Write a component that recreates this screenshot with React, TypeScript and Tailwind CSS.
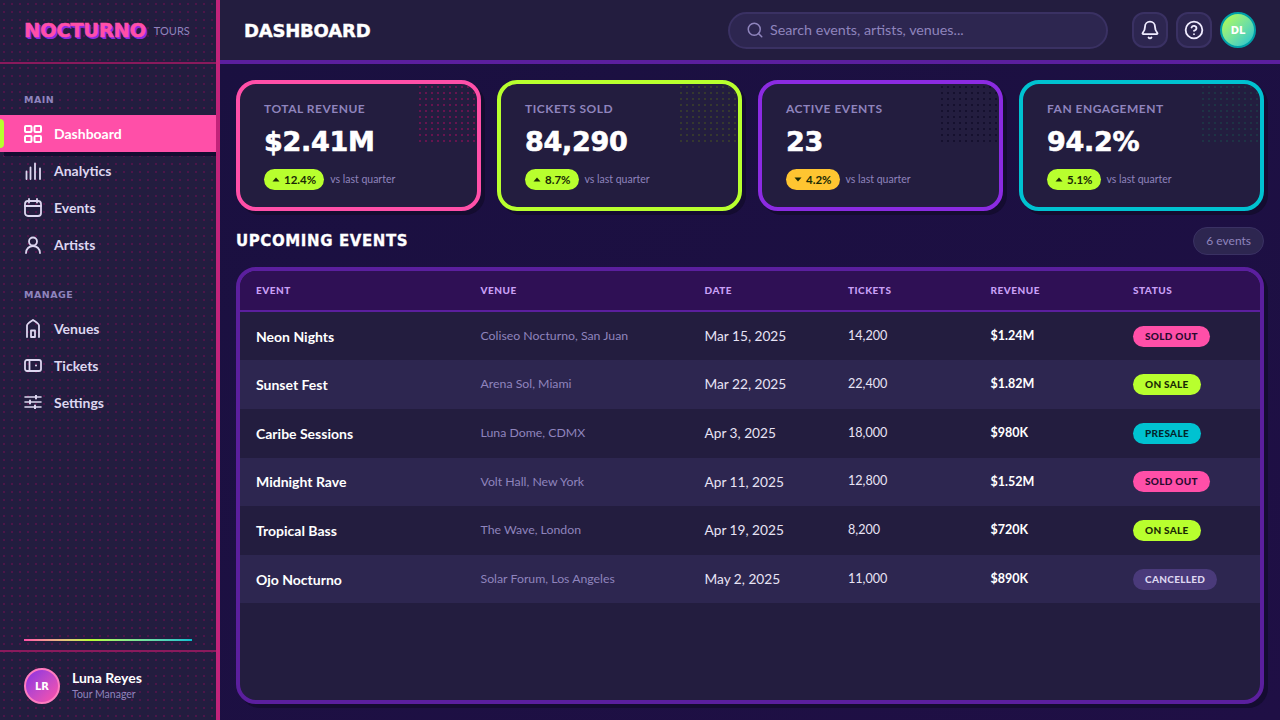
import { Search, Bell, CircleHelp } from "lucide-react";
import type { ReactNode } from "react";

const display = "font-['DejaVu_Sans'] font-black";

const DashIcon = () => (
  <svg width="18" height="18" viewBox="0 0 18 18" fill="none" stroke="currentColor" strokeWidth="2">
    <rect x="1" y="1" width="6.500" height="6" rx="1" />
    <rect x="10.500" y="1" width="6.500" height="6" rx="1" />
    <rect x="1" y="11" width="6.500" height="6" rx="1" />
    <rect x="10.500" y="11" width="6.500" height="6" rx="1" />
  </svg>
);

const BarsIcon = () => (
  <svg width="18" height="18" viewBox="0 0 18 18" fill="none" stroke="currentColor" strokeWidth="1.800" strokeLinecap="round">
    <path d="M2.500 17V9.500M6.500 17V5.500M11 17V1.500M16 17V6.500" />
  </svg>
);

const CalIcon = () => (
  <svg width="18" height="19" viewBox="0 0 18 19" fill="none" stroke="currentColor" strokeWidth="1.800" strokeLinecap="round">
    <rect x="1" y="3" width="16" height="15" rx="3" />
    <path d="M1 8h16M5 1v3.500M13 1v3.500" />
  </svg>
);

const UserIcon = () => (
  <svg width="18" height="18" viewBox="0 0 18 18" fill="none" stroke="currentColor" strokeWidth="1.800" strokeLinecap="round">
    <circle cx="9" cy="5.500" r="4" />
    <path d="M2 17c0-4 3-7 7-7s7 3 7 7" />
  </svg>
);

const VenueIcon = () => (
  <svg width="18" height="19" viewBox="0 0 18 19" fill="none" stroke="currentColor" strokeWidth="1.800" strokeLinejoin="round" strokeLinecap="round">
    <path d="M3 18V6.500C3 5 4 4.500 9 1c5 3.500 6 4 6 5.500V18" />
    <path d="M7 18v-6.500h4V18z" />
  </svg>
);

const TicketIcon = () => (
  <svg width="18" height="13" viewBox="0 0 18 13" fill="none" stroke="currentColor" strokeWidth="1.800">
    <rect x="1" y="1" width="16" height="11" rx="2" />
    <path d="M5.500 1v11" />
    <circle cx="12" cy="6.500" r="1" fill="currentColor" stroke="none" />
  </svg>
);

const SlidersIcon = () => (
  <svg width="18" height="14" viewBox="0 0 18 14" fill="none" stroke="currentColor" strokeWidth="1.600" strokeLinecap="round">
    <path d="M1 2h16M1 7h16M1 12h16" />
    <path d="M12 0.500v3M6 5.500v3M11 10.500v3" strokeWidth="2" />
  </svg>
);

const Arrow = ({ up }: { up: boolean }) => (
  <svg width="8" height="5" viewBox="0 0 8 5" fill="currentColor">
    <path d={up ? "M4 0.500L7.500 4.500H0.500z" : "M4 4.500L0.500 0.500H7.500z"} />
  </svg>
);

const Nav = ({ icon, label, active }: { icon: ReactNode; label: string; active?: boolean }) => (
  <div
    className={
      active
        ? "relative flex h-[37px] items-center gap-3 bg-[#ff4fa8] pl-6 text-[14px] font-bold text-white shadow-[4px_4px_0_#140c30]"
        : "flex h-[37px] items-center gap-3 pl-6 text-[14px] font-bold text-[#ddd6f0]"
    }
  >
    {active && <div className="absolute top-1 left-0 h-[29px] w-1 rounded-r bg-[#b8ff2e]" />}
    <span className="flex w-[18px] justify-center">{icon}</span>
    {label}
  </div>
);

const cards = [
  { title: "TOTAL REVENUE", value: "$2.41M", delta: "12.4%", up: true, border: "border-[#ff4fa8]", dots: "bg-[radial-gradient(circle,#66144f_1px,transparent_1.200px)]" },
  { title: "TICKETS SOLD", value: "84,290", delta: "8.7%", up: true, border: "border-[#b8ff2e]", dots: "bg-[radial-gradient(circle,#35382f_1px,transparent_1.200px)]" },
  { title: "ACTIVE EVENTS", value: "23", delta: "4.2%", up: false, border: "border-[#8b2be2]", dots: "bg-[radial-gradient(circle,#15102e_1px,transparent_1.200px)]" },
  { title: "FAN ENGAGEMENT", value: "94.2%", delta: "5.1%", up: true, border: "border-[#00c2d1]", dots: "bg-[radial-gradient(circle,#1e3345_1px,transparent_1.200px)]" },
];

const rows = [
  ["Neon Nights", "Coliseo Nocturno, San Juan", "Mar 15, 2025", "14,200", "$1.24M", "SOLD OUT"],
  ["Sunset Fest", "Arena Sol, Miami", "Mar 22, 2025", "22,400", "$1.82M", "ON SALE"],
  ["Caribe Sessions", "Luna Dome, CDMX", "Apr 3, 2025", "18,000", "$980K", "PRESALE"],
  ["Midnight Rave", "Volt Hall, New York", "Apr 11, 2025", "12,800", "$1.52M", "SOLD OUT"],
  ["Tropical Bass", "The Wave, London", "Apr 19, 2025", "8,200", "$720K", "ON SALE"],
  ["Ojo Nocturno", "Solar Forum, Los Angeles", "May 2, 2025", "11,000", "$890K", "CANCELLED"],
];

const statusClass: Record<string, string> = {
  "SOLD OUT": "bg-[#ff4fa8] text-[#2a0a30]",
  "ON SALE": "bg-[#b8ff2e] text-[#1a2a05]",
  PRESALE: "bg-[#00c2d1] text-[#04262c]",
  CANCELLED: "bg-[#4a3a7a] text-[#ddd6f0]",
};

const cols = "grid grid-cols-[224.500px_224px_143.500px_142.500px_142.500px_1fr] items-center pl-4";

export default function App() {
  return (
    <div className="flex h-screen w-full overflow-hidden bg-[#1a1040] font-['Lato','Liberation_Sans',sans-serif] text-white">
      <aside className="flex h-full w-[220px] shrink-0 flex-col overflow-hidden border-r-4 border-[#c2237a] bg-[#231d3f] bg-[radial-gradient(circle,#4d1549_1px,transparent_1.200px)] bg-[size:8px_8px]">
        <div className="flex h-[64px] shrink-0 items-center gap-2 border-b-2 border-[#8a1a5c] pl-6">
          <span className={`${display} text-[19.500px] tracking-[-0.300px] text-[#ff4fa8] [-webkit-text-stroke:0.4px_#ff4fa8] [text-shadow:1px_1px_0_#8b2be2,2px_2px_0_#8b2be2]`}>NOCTURNO</span>
          <span className="text-[11px] text-[#8f84bd]">TOURS</span>
        </div>
        <div className="pt-[29px]">
          <div className={`${display} mb-[8px] pl-6 text-[9.500px] tracking-wider text-[#8f84bd]`}>MAIN</div>
          <Nav active icon={<DashIcon />} label="Dashboard" />
          <Nav icon={<BarsIcon />} label="Analytics" />
          <Nav icon={<CalIcon />} label="Events" />
          <Nav icon={<UserIcon />} label="Artists" />
          <div className={`${display} mt-[25px] mb-[7px] pl-6 text-[9.500px] tracking-wider text-[#8f84bd]`}>MANAGE</div>
          <Nav icon={<VenueIcon />} label="Venues" />
          <Nav icon={<TicketIcon />} label="Tickets" />
          <Nav icon={<SlidersIcon />} label="Settings" />
        </div>
        <div className="mt-auto mr-6 mb-[9px] ml-6 h-[2px] shrink-0 bg-gradient-to-r from-[#ff4fa8] via-[#b8ff2e] via-40% to-[#00c2d1]" />
        <div className="flex h-[70px] shrink-0 items-center gap-3 border-t-2 border-[#8a1a5c] pl-6">
          <div className={`${display} flex h-9 w-9 items-center justify-center rounded-full border-2 border-[#ff7cc0] bg-gradient-to-br from-[#8b2be2] to-[#ff4fa8] text-[10px]`}>LR</div>
          <div>
            <div className="text-[14px] leading-[17px] font-bold">Luna Reyes</div>
            <div className="text-[10.500px] leading-[17px] text-[#8f84bd]">Tour Manager</div>
          </div>
        </div>
      </aside>

      <div className="flex min-w-0 flex-1 flex-col">
        <header className="flex h-[64px] shrink-0 items-center border-b-4 border-[#5b1f9e] bg-[#231d3f] pr-6 pl-6">
          <h1 className={`${display} text-[18px] tracking-[-0.200px] [-webkit-text-stroke:0.4px_white]`}>DASHBOARD</h1>
          <div className="ml-auto flex h-[37px] w-[380px] items-center gap-[6px] rounded-full border-2 border-[#3a3163] bg-[#2d2650] pl-4 text-[14.300px] text-[#8f84bd]">
            <Search size={18} strokeWidth={2} />
            Search events, artists, venues...
          </div>
          <div className="ml-6 flex h-9 w-9 items-center justify-center rounded-xl border-2 border-[#3a3163] bg-[#2d2650] text-[#f0ecff]"><Bell size={20} strokeWidth={2.200} /></div>
          <div className="ml-2 flex h-9 w-9 items-center justify-center rounded-xl border-2 border-[#3a3163] bg-[#2d2650] text-[#f0ecff]"><CircleHelp size={20} strokeWidth={2.200} /></div>
          <div className={`${display} ml-2 flex h-9 w-9 items-center justify-center rounded-full border-2 border-[#00a0a8] bg-gradient-to-br from-[#b8ff2e] to-[#00c2d1] text-[10px]`}>DL</div>
        </header>

        <main className="flex min-h-0 flex-1 flex-col bg-gradient-to-br from-[#1a1040] to-[#1f0f45] pt-4 pr-4 pb-4 pl-4">
          <div className="grid grid-cols-4 gap-4">
            {cards.map((c) => (
              <div key={c.title} className={`relative h-[131px] rounded-[20px] border-4 ${c.border} bg-[#231d3f] pt-[17px] pl-6 shadow-[4px_4px_0_#140c30]`}>
                <div className={`absolute top-0 right-0 h-[60px] w-[60px] rounded-tr-[16px] ${c.dots} bg-[size:6px_6px]`} />
                <div className="text-[12px] leading-[16px] font-bold tracking-[0.500px] text-[#8f84bd]">{c.title}</div>
                <div className={`${display} mt-[8px] text-[27px] leading-[34px] tracking-[-0.300px] [-webkit-text-stroke:0.6px_white]`}>{c.value}</div>
                <div className="mt-[10px] flex items-center gap-[6px]">
                  <span className={`${c.up ? "bg-[#b8ff2e]" : "bg-[#ffc531]"} flex h-[21px] items-center gap-[4px] rounded-full pr-2 pl-2 text-[11.500px] font-bold text-[#1a2a05]`}>
                    <Arrow up={c.up} />
                    {c.delta}
                  </span>
                  <span className="text-[10.500px] text-[#8f84bd]">vs last quarter</span>
                </div>
              </div>
            ))}
          </div>

          <div className="mt-4 mb-3 flex h-[28px] items-center justify-between">
            <h2 className={`${display} text-[15px] tracking-[0.600px] [-webkit-text-stroke:0.3px_white]`}>UPCOMING EVENTS</h2>
            <span className="flex h-[28px] items-center rounded-full border border-[#3a3163] bg-[#2d2650] pr-3 pl-3 text-[12px] text-[#8f84bd]">6 events</span>
          </div>

          <div className="min-h-0 flex-1 overflow-hidden rounded-[20px] border-4 border-[#5b1f9e] bg-[#231d3f] shadow-[4px_4px_0_#140c30]">
            <div className={`${cols} h-[40.800px] border-b-2 border-[#5b1f9e] bg-[#2f1055] text-[10px] font-black tracking-wider text-[#c9a0f5]`}>
              {["EVENT", "VENUE", "DATE", "TICKETS", "REVENUE", "STATUS"].map((h) => <div key={h}>{h}</div>)}
            </div>
            {rows.map((r, i) => (
              <div key={r[0]} className={`${cols} h-[48.600px] ${i % 2 ? "bg-[#2d2650]" : "bg-[#231d3f]"}`}>
                <div className="text-[14px] font-bold">{r[0]}</div>
                <div className="text-[12.300px] text-[#8f84bd]">{r[1]}</div>
                <div className="text-[13.700px] text-[#e8e3f5]">{r[2]}</div>
                <div className="text-[12.600px] text-[#e8e3f5]">{r[3]}</div>
                <div className="text-[12.500px] font-bold">{r[4]}</div>
                <div className="flex">
                  <span className={`${statusClass[r[5]]} flex h-[21px] items-center rounded-full pr-3 pl-3 text-[10px] font-black tracking-[0.300px]`}>{r[5]}</span>
                </div>
              </div>
            ))}
          </div>
        </main>
      </div>
    </div>
  );
}
